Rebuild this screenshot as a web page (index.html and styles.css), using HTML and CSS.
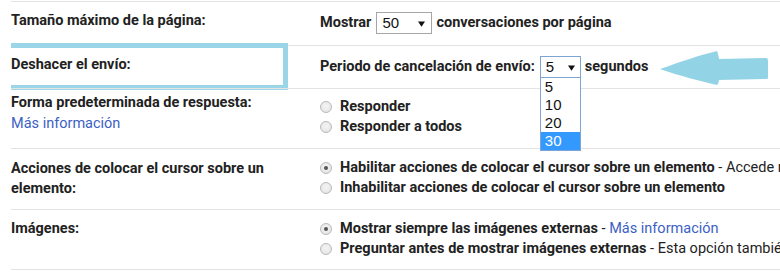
FILE: index.html
```html
<!DOCTYPE html>
<html lang="es">
<head>
<meta charset="utf-8">
<title>Configuración</title>
<link rel="stylesheet" href="styles.css">
</head>
<body>
<div class="settings">
  <div class="row row-page">
    <div class="label">Tamaño máximo de la página:</div>
    <div class="value inline">
      <span>Mostrar</span>
      <span class="select select-page">50<svg class="caret" viewBox="0 0 8 6"><path d="M0 0H8L4 6Z"/></svg></span>
      <span>conversaciones por página</span>
    </div>
  </div>

  <div class="row row-undo">
    <div class="highlight"></div>
    <div class="label">Deshacer el envío:</div>
    <div class="value inline">
      <span>Periodo de cancelación de envío:</span>
      <span class="select select-undo">5<svg class="caret" viewBox="0 0 8 6"><path d="M0 0H8L4 6Z"/></svg>
        <span class="dropdown">
          <span class="option">5</span>
          <span class="option">10</span>
          <span class="option">20</span>
          <span class="option selected">30</span>
        </span>
      </span>
      <span>segundos</span>
    </div>
    <svg class="pointer" viewBox="0 0 120 45" width="120" height="45">
      <path d="M5 23 C 25 16, 45 9, 62 5 C 63 8, 64 11, 64 13 L 111 12 C 113 12, 113 14, 113 16 L 113 31 C 113 33, 112 33, 111 33 L 64 34 C 64 36, 63 38, 62 39 C 45 35, 25 30, 5 23 Z" fill="#93d3e6"/>
    </svg>
  </div>

  <div class="row row-reply">
    <div class="label">
      <div>Forma predeterminada de respuesta:</div>
      <a class="link" href="#">Más información</a>
    </div>
    <div class="value">
      <div class="choice"><span class="radio"></span><b>Responder</b></div>
      <div class="choice"><span class="radio"></span><b>Responder a todos</b></div>
    </div>
  </div>

  <div class="row row-hover">
    <div class="label">Acciones de colocar el cursor sobre un elemento:</div>
    <div class="value">
      <div class="choice"><span class="radio checked"></span><b>Habilitar acciones de colocar el cursor sobre un elemento</b><span class="note"> - Accede r</span></div>
      <div class="choice"><span class="radio"></span><b>Inhabilitar acciones de colocar el cursor sobre un elemento</b></div>
    </div>
  </div>

  <div class="row row-images">
    <div class="label">Imágenes:</div>
    <div class="value">
      <div class="choice"><span class="radio checked"></span><b>Mostrar siempre las imágenes externas</b><span class="note"> - </span><a class="link" href="#">Más información</a></div>
      <div class="choice"><span class="radio"></span><b>Preguntar antes de mostrar imágenes externas</b><span class="note"> - Esta opción tambié</span></div>
    </div>
  </div>
</div>
</body>
</html>
```

FILE: styles.css
```css
html, body {
  margin: 0;
  padding: 0;
  background: #fff;
}

body {
  width: 780px;
  height: 273px;
  overflow: hidden;
  font-family: Roboto, "Liberation Sans", Arial, sans-serif;
  font-size: 14.5px;
  color: #222;
}

.settings {
  padding-top: 1px;
  margin-left: 11px;
  width: 769px;
  overflow: hidden;
}

.row {
  position: relative;
  display: grid;
  grid-template-columns: 309px 1fr;
  box-sizing: border-box;
  border-top: 1px solid #e3e3e3;
  white-space: nowrap;
}

.row-page { height: 44px; }
.row-undo { height: 43px; }
.row-reply { height: 60px; }
.row-hover { height: 61px; }
.row-images { height: 61px; border-bottom: 1px solid #e3e3e3; }

.label {
  font-weight: bold;
  line-height: 20px;
  white-space: normal;
}

.row-page .label { padding-top: 9px; }
.row-undo .label { padding-top: 9px; position: relative; }
.row-reply .label { padding-top: 3px; line-height: 21px; }
.row-hover .label { padding-top: 10px; padding-right: 40px; }
.row-images .label { padding-top: 9px; }

.value {
  font-weight: bold;
  line-height: 20px;
  overflow: hidden;
}

.value.inline {
  display: flex;
  align-items: center;
  height: 22px;
  gap: 5px;
  overflow: visible;
}

.row-page .value { padding-top: 10px; }
.row-undo .value { padding-top: 10px; }
.row-reply .value { padding-top: 8px; }
.row-hover .value { padding-top: 9px; }
.row-images .value { padding-top: 9px; }

.select {
  position: relative;
  display: flex;
  align-items: center;
  box-sizing: border-box;
  height: 22px;
  border: 1px solid #a6a6a6;
  background: #fff;
  font-family: "Liberation Sans", Arial, sans-serif;
  font-weight: normal;
  font-size: 15px;
  color: #111;
  padding-left: 5px;
  margin-right: -1px;
}

.select-page { width: 56px; }
.select-undo { width: 41px; border-color: #7ea4d6; }

.caret {
  position: absolute;
  right: 6px;
  top: 8px;
  width: 7px;
  height: 6px;
  fill: #111;
}

.select-undo .caret { right: 5px; }

.dropdown {
  position: absolute;
  left: -1px;
  top: 20px;
  width: 41px;
  box-sizing: border-box;
  border: 1px solid #7ea4d6;
  background: #fff;
  display: flex;
  flex-direction: column;
  z-index: 2;
}

.option {
  display: block;
  height: 18px;
  line-height: 18px;
  padding-left: 4px;
  font-size: 15px;
  color: #111;
}

.option.selected {
  background: #3399ff;
  color: #fff;
}

.highlight {
  position: absolute;
  left: -8px;
  top: -3px;
  width: 285px;
  height: 47px;
  box-sizing: border-box;
  border: 5px solid #9ad6e7;
  background: #fff;
}

.pointer {
  position: absolute;
  left: 644px;
  top: 0;
}

.choice {
  display: flex;
  align-items: center;
  height: 20px;
}

.choice b { font-weight: bold; }

.radio {
  flex: none;
  box-sizing: border-box;
  width: 12px;
  height: 12px;
  border-radius: 50%;
  border: 1px solid #b9b9b9;
  background: radial-gradient(circle at 50% 40%, #f4f4f4 0%, #e2e2e2 100%);
  margin-right: 8px;
  position: relative;
}

.radio.checked::after {
  content: "";
  position: absolute;
  left: 3px;
  top: 3px;
  width: 4px;
  height: 4px;
  border-radius: 50%;
  background: #555;
}

.note {
  font-weight: normal;
  white-space: pre;
}

.link {
  color: #3b5fc4;
  text-decoration: none;
  font-weight: normal;
}
```
